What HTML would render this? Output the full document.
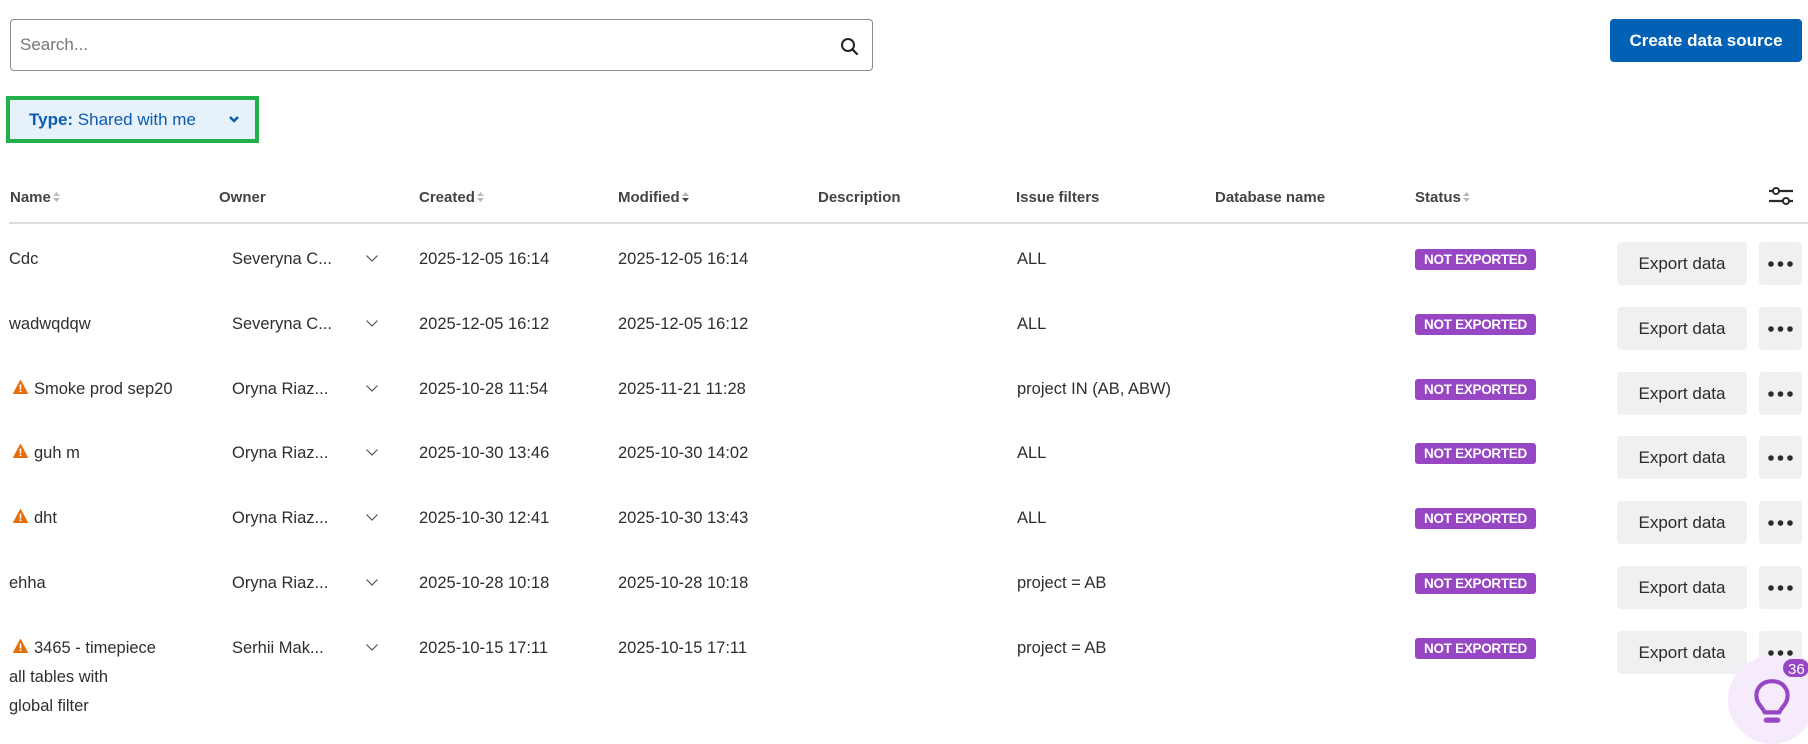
<!DOCTYPE html>
<html><head><meta charset="utf-8"><style>
*{box-sizing:border-box;margin:0;padding:0}
body{width:1808px;height:736px;overflow:hidden;background:#fff;font-family:"Liberation Sans",sans-serif;color:#2b2b2b;position:relative}
.a{position:absolute;white-space:nowrap}
.search{left:10px;top:19px;width:863px;height:52px;border:1px solid #8a8a8f;border-radius:4px}
.search span{position:absolute;left:9px;top:15px;font-size:17px;color:#767676}
.create{left:1610px;top:19px;width:192px;height:43px;background:#0061b5;border-radius:4px;color:#fff;font-weight:bold;font-size:17px;text-align:center;line-height:43px}
.chip{left:6px;top:96px;width:253px;height:47px;border:4px solid #22b04a;background:#e6f1fb;color:#0b5cad;font-size:17px;line-height:39px;padding-left:19px}
.h{top:189px;font-size:15px;font-weight:bold;color:#444}
.sort{display:inline-block;vertical-align:middle;margin-left:2px;width:7px;height:12px;position:relative;top:-1px}
.line{left:9px;top:222px;width:1799px;height:2px;background:#dcdcdc}
.c{font-size:16.5px;color:#2e2e2e}
.badge{background:#9747c4;color:#fff;font-size:13.5px;font-weight:bold;height:21px;line-height:21px;padding:0 5px;border-radius:3px;width:121px;text-align:center;letter-spacing:-0.3px}
.exp{width:130px;height:43px;background:#eff0f2;border-radius:4px;font-size:17px;text-align:center;line-height:43px;color:#2b2b2b}
.more{width:43px;height:43px;background:#eff0f2;border-radius:4px;text-align:center}
</style></head><body>
<div class="a search"><span>Search...</span>
<svg style="position:absolute;left:829px;top:17px" width="20" height="20" viewBox="0 0 20 20"><circle cx="8" cy="8" r="6" fill="none" stroke="#222" stroke-width="2"/><line x1="12.5" y1="12.5" x2="17" y2="17" stroke="#222" stroke-width="2.2" stroke-linecap="round"/></svg></div>
<div class="a create">Create data source</div>
<div class="a chip"><b>Type:</b> Shared with me
<svg style="position:absolute;left:218px;top:15px" width="12" height="9" viewBox="0 0 12 9"><path d="M2 2 L6 6 L10 2" fill="none" stroke="#0b5cad" stroke-width="2.4"/></svg></div>

<div class="a h" style="left:10px">Name<svg class="sort" viewBox="0 0 7 12"><path d="M0 5 L3.5 1 L7 5Z M0 7 L3.5 11 L7 7Z" fill="#b8b8b8"/></svg></div>
<div class="a h" style="left:219px">Owner</div>
<div class="a h" style="left:419px">Created<svg class="sort" viewBox="0 0 7 12"><path d="M0 5 L3.5 1 L7 5Z M0 7 L3.5 11 L7 7Z" fill="#b8b8b8"/></svg></div>
<div class="a h" style="left:618px">Modified<svg class="sort" viewBox="0 0 7 12"><path d="M0 5 L3.5 1 L7 5Z" fill="#b8b8b8"/><path d="M0 7 L3.5 11 L7 7Z" fill="#444"/></svg></div>
<div class="a h" style="left:818px">Description</div>
<div class="a h" style="left:1016px">Issue filters</div>
<div class="a h" style="left:1215px">Database name</div>
<div class="a h" style="left:1415px">Status<svg class="sort" viewBox="0 0 7 12"><path d="M0 5 L3.5 1 L7 5Z M0 7 L3.5 11 L7 7Z" fill="#b8b8b8"/></svg></div>
<svg class="a" style="left:1768px;top:186px" width="26" height="20" viewBox="0 0 26 20"><line x1="1" y1="5" x2="25" y2="5" stroke="#2b2b2b" stroke-width="2.2"/><line x1="1" y1="15" x2="25" y2="15" stroke="#2b2b2b" stroke-width="2.2"/><circle cx="8" cy="5" r="3" fill="#fff" stroke="#2b2b2b" stroke-width="2"/><circle cx="18" cy="15" r="3" fill="#fff" stroke="#2b2b2b" stroke-width="2"/></svg>
<div class="a line"></div>

<div id="rows"></div>
<script>
var R=[["Cdc",0,"Severyna C...","2025-12-05 16:14","2025-12-05 16:14","ALL"],
["wadwqdqw",0,"Severyna C...","2025-12-05 16:12","2025-12-05 16:12","ALL"],
["Smoke prod sep20",1,"Oryna Riaz...","2025-10-28 11:54","2025-11-21 11:28","project IN (AB, ABW)"],
["guh m",1,"Oryna Riaz...","2025-10-30 13:46","2025-10-30 14:02","ALL"],
["dht",1,"Oryna Riaz...","2025-10-30 12:41","2025-10-30 13:43","ALL"],
["ehha",0,"Oryna Riaz...","2025-10-28 10:18","2025-10-28 10:18","project = AB"],
["3465 - timepiece",1,"Serhii Mak...","2025-10-15 17:11","2025-10-15 17:11","project = AB"]];
var warn='<svg style="position:absolute;left:-21px;top:0px" width="15" height="14" viewBox="0 0 15 14"><path d="M7.5 0.5 L14.5 13.5 L0.5 13.5Z" fill="#e46f0a" stroke="#e46f0a" stroke-linejoin="round"/><rect x="6.7" y="4.5" width="1.6" height="5" fill="#fff"/><rect x="6.7" y="10.5" width="1.6" height="1.6" fill="#fff"/></svg>';
var h='';
R.forEach(function(r,i){var cy=258+i*64.8;var t=cy-8;
h+='<div class="a c" style="left:'+(r[1]?34:9)+'px;top:'+t+'px">'+(r[1]?warn:'')+r[0]+'</div>';
h+='<div class="a c" style="left:232px;top:'+t+'px">'+r[2]+'</div>';
h+='<svg class="a" style="left:365px;top:'+(cy-4)+'px" width="14" height="9" viewBox="0 0 14 9"><path d="M1.5 1.5 L7 7 L12.5 1.5" fill="none" stroke="#555" stroke-width="1.2"/></svg>';
h+='<div class="a c" style="left:419px;top:'+t+'px">'+r[3]+'</div>';
h+='<div class="a c" style="left:618px;top:'+t+'px">'+r[4]+'</div>';
h+='<div class="a c" style="left:1017px;top:'+t+'px">'+r[5]+'</div>';
h+='<div class="a badge" style="left:1415px;top:'+(cy-9)+'px">NOT EXPORTED</div>';
h+='<div class="a exp" style="left:1617px;top:'+(cy-16)+'px">Export data</div>';
h+='<div class="a more" style="left:1759px;top:'+(cy-16)+'px"><svg width="43" height="43" viewBox="0 0 43 43"><circle cx="12" cy="22" r="2.8" fill="#2b2b2b"/><circle cx="21.5" cy="22" r="2.8" fill="#2b2b2b"/><circle cx="31" cy="22" r="2.8" fill="#2b2b2b"/></svg></div>';
});
h+='<div class="a c" style="left:9px;top:668px">all tables with</div><div class="a c" style="left:9px;top:697px">global filter</div>';
document.getElementById('rows').innerHTML=h;
</script>
<div class="a" style="left:1728px;top:656px;width:88px;height:88px;border-radius:50%;background:#f6ebfd"></div>
<svg class="a" style="left:1751px;top:677px" width="42" height="52" viewBox="0 0 40 50"><path d="M20 4 C10 4 5 11 5 18 C5 25 10 28 13 34 L27 34 C30 28 35 25 35 18 C35 11 30 4 20 4Z" fill="none" stroke="#9747c4" stroke-width="4"/><rect x="12" y="39" width="16" height="5" rx="2.5" fill="#9747c4"/></svg>
<div class="a" style="left:1781px;top:657px;width:30px;height:22px;border-radius:11px;background:#9747c4;color:#fff;font-size:15px;line-height:22px;padding-left:5px;border:2px solid #f6ebfd">36</div>
</body></html>
